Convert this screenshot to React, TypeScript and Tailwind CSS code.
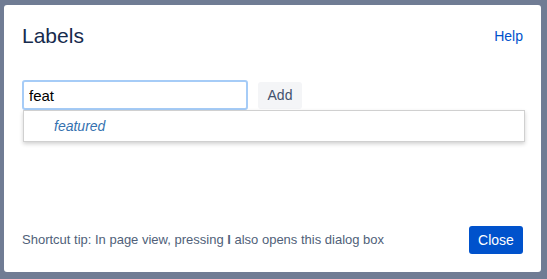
import { useState } from "react";

export default function App() {
  const [value, setValue] = useState("feat");

  return (
    <div
      className="h-[279px] w-[547px] overflow-hidden bg-[#707c94] pl-[4px] pt-[5px]"
      style={{ fontFamily: '"Liberation Sans", Arial, sans-serif' }}
    >
      <div className="flex h-[267px] w-[537px] flex-col rounded-[3px] bg-white px-[18px] pb-[18px] pt-[19px]">
        <div className="flex items-center justify-between">
          <h2 className="text-[21px] leading-[24px] text-[#172b4d]">Labels</h2>
          <a className="text-[14px] text-[#0052cc]">Help</a>
        </div>

        <div className="relative mt-[32px] flex items-start gap-[10px]">
          <input
            value={value}
            onChange={(e) => setValue(e.target.value)}
            className="h-[30px] w-[226px] rounded-[3px] border-2 border-[#a6ccf7] px-[5px] text-[15px] text-black outline-none"
          />
          <button className="mt-[2px] h-[27px] w-[44px] rounded-[3px] bg-[#f4f5f7] text-[14px] text-[#42526e]">
            Add
          </button>
          <div className="absolute left-[1px] top-[30px] flex h-[32px] w-[502px] items-center border border-[#d0d0d0] bg-white pl-[30px] shadow-[0_2px_4px_rgba(0,0,0,0.18)]">
            <span className="text-[14px] italic text-[#3572b0]">featured</span>
          </div>
        </div>

        <div className="mt-auto flex items-center justify-between">
          <p className="text-[13px] text-[#505f79]">
            Shortcut tip: In page view, pressing <b className="font-bold">l</b> also opens this dialog box
          </p>
          <button className="h-[28px] w-[54px] rounded-[3px] bg-[#0052cc] text-[14px] text-white">
            Close
          </button>
        </div>
      </div>
    </div>
  );
}
